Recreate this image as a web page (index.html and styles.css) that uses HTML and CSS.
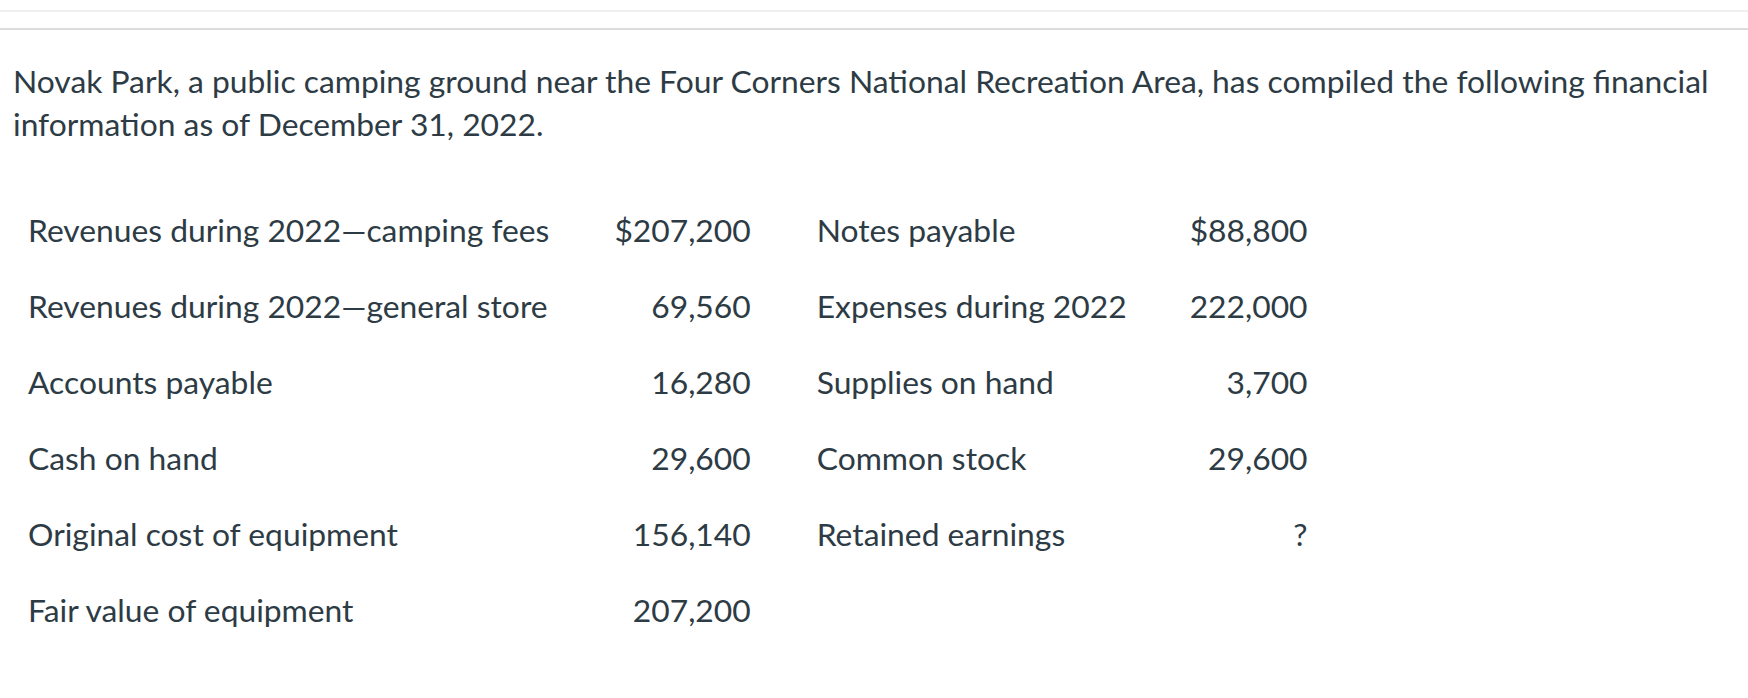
FILE: index.html
```html
<!DOCTYPE html>
<html lang="en">
<head>
<meta charset="utf-8">
<title>Novak Park</title>
<link rel="stylesheet" href="styles.css">
</head>
<body>
<div class="rule rule-light"></div>
<div class="rule rule-dark"></div>
<p class="intro">Novak Park, a public camping ground near the Four Corners National Recreation Area, has compiled the following financial information as of December 31, 2022.</p>
<div class="data">
  <div class="cell label">Revenues during 2022—camping fees</div>
  <div class="cell num num-a">$207,200</div>
  <div class="cell label label-b">Notes payable</div>
  <div class="cell num num-b">$88,800</div>

  <div class="cell label">Revenues during 2022—general store</div>
  <div class="cell num num-a">69,560</div>
  <div class="cell label label-b">Expenses during 2022</div>
  <div class="cell num num-b">222,000</div>

  <div class="cell label">Accounts payable</div>
  <div class="cell num num-a">16,280</div>
  <div class="cell label label-b">Supplies on hand</div>
  <div class="cell num num-b">3,700</div>

  <div class="cell label">Cash on hand</div>
  <div class="cell num num-a">29,600</div>
  <div class="cell label label-b">Common stock</div>
  <div class="cell num num-b">29,600</div>

  <div class="cell label">Original cost of equipment</div>
  <div class="cell num num-a">156,140</div>
  <div class="cell label label-b">Retained earnings</div>
  <div class="cell num num-b">?</div>

  <div class="cell label">Fair value of equipment</div>
  <div class="cell num num-a">207,200</div>
  <div class="cell label label-b"></div>
  <div class="cell num num-b"></div>
</div>
</body>
</html>
```

FILE: styles.css
```css
html, body {
  margin: 0;
  padding: 0;
  background: #ffffff;
}
body {
  font-family: Lato, "Noto Sans", sans-serif;
  color: #2d3b45;
}
.rule {
  height: 2px;
}
.rule-light {
  margin-top: 10px;
  background: #efefef;
}
.rule-dark {
  margin-top: 16px;
  background: #dcdcdc;
}
.intro {
  margin: 30px 0 0 0;
  padding: 0 13px;
  font-size: 31.8px;
  line-height: 43px;
}
.data {
  display: grid;
  grid-template-columns: max-content max-content max-content max-content;
  justify-content: start;
  margin: 46px 0 0 28px;
  font-size: 31.8px;
  line-height: 42px;
}
.cell {
  padding-top: 17px;
  padding-bottom: 17px;
  white-space: nowrap;
}
.num {
  text-align: right;
}
.num-a {
  padding-left: 65px;
}
.label-b {
  padding-left: 66px;
}
.num-b {
  padding-left: 63px;
}
```
